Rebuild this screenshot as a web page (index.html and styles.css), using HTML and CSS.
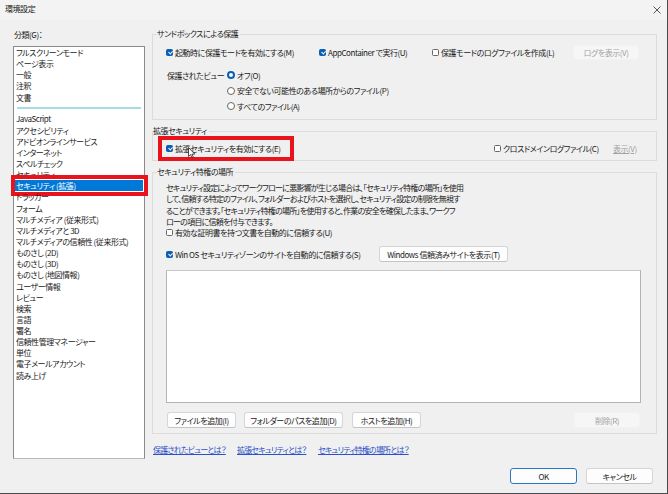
FILE: index.html
```html
<!DOCTYPE html>
<html lang="ja">
<head>
<meta charset="utf-8">
<title>環境設定</title>
<link rel="stylesheet" href="styles.css">
</head>
<body>
<div class="window">
  <div class="titlebar">
    <span class="title">環境設定</span>
    <svg class="close" width="8" height="8" viewBox="0 0 8 8"><path d="M0.5 0.5 L7.5 7.5 M7.5 0.5 L0.5 7.5" stroke="#444" stroke-width="0.9" fill="none"/></svg>
  </div>
  <div class="main">
    <div class="left">
      <div class="cat-label">分類(G)：</div>
      <div class="catlist">
        <div class="item">フルスクリーンモード</div>
        <div class="item">ページ表示</div>
        <div class="item">一般</div>
        <div class="item">注釈</div>
        <div class="item">文書</div>
        <div class="sep"></div>
        <div class="item">JavaScript</div>
        <div class="item">アクセシビリティ</div>
        <div class="item">アドビオンラインサービス</div>
        <div class="item">インターネット</div>
        <div class="item">スペルチェック</div>
        <div class="item">セキュリティ</div>
        <div class="item selected">セキュリティ (拡張)<span class="redbox redbox-list"></span></div>
        <div class="item">トラッカー</div>
        <div class="item">フォーム</div>
        <div class="item">マルチメディア (従来形式)</div>
        <div class="item">マルチメディアと 3D</div>
        <div class="item">マルチメディアの信頼性 (従来形式)</div>
        <div class="item">ものさし (2D)</div>
        <div class="item">ものさし (3D)</div>
        <div class="item">ものさし (地図情報)</div>
        <div class="item">ユーザー情報</div>
        <div class="item">レビュー</div>
        <div class="item">検索</div>
        <div class="item">言語</div>
        <div class="item">署名</div>
        <div class="item">信頼性管理マネージャー</div>
        <div class="item">単位</div>
        <div class="item">電子メールアカウント</div>
        <div class="item">読み上げ</div>
      </div>
    </div>
    <div class="right">
      <fieldset class="group g1">
        <legend>サンドボックスによる保護</legend>
        <div class="row r1">
          <label class="check c1"><span class="cb on"></span>起動時に保護モードを有効にする(M)</label>
          <label class="check c2"><span class="cb on"></span>AppContainer で実行(U)</label>
          <label class="check c3"><span class="cb"></span>保護モードのログファイルを作成(L)</label>
          <span class="btn disabled logbtn">ログを表示(V)</span>
        </div>
        <div class="row r2">
          <span class="pv-label">保護されたビュー</span>
          <label class="radio"><span class="rb on"></span>オフ(O)</label>
        </div>
        <div class="row r3 indent">
          <label class="radio"><span class="rb"></span>安全でない可能性のある場所からのファイル(P)</label>
        </div>
        <div class="row r4 indent">
          <label class="radio"><span class="rb"></span>すべてのファイル(A)</label>
        </div>
      </fieldset>

      <fieldset class="group g2">
        <legend>拡張セキュリティ</legend>
        <div class="row r5">
          <label class="check es"><span class="cb on"></span>拡張セキュリティを有効にする(E)</label>
          <label class="check xd"><span class="cb"></span>クロスドメインログファイル(C)</label>
          <span class="showlink">表示(V)</span>
          <span class="redbox redbox-es"></span>
          <svg class="cursor" width="8" height="12" viewBox="0 0 8 12"><path d="M0.5 0.5 L0.5 9.5 L2.6 7.6 L4 10.8 L5.3 10.2 L3.9 7.1 L6.8 7.1 Z" fill="#fff" stroke="#222" stroke-width="0.8"/></svg>
        </div>
      </fieldset>

      <fieldset class="group g3">
        <legend>セキュリティ特権の場所</legend>
        <p class="desc">セキュリティ設定によってワークフローに悪影響が生じる場合は、「セキュリティ特権の場所」を使用<br>して、信頼する特定のファイル、フォルダーおよびホストを選択し、セキュリティ設定の制限を無視す<br>ることができます。「セキュリティ特権の場所」を使用すると、作業の安全を確保したまま、ワークフ<br>ローの項目に信頼を付与できます。</p>
        <div class="row r6">
          <label class="check"><span class="cb"></span>有効な証明書を持つ文書を自動的に信頼する(U)</label>
        </div>
        <div class="row r7">
          <label class="check winos"><span class="cb on"></span>Win OS セキュリティゾーンのサイトを自動的に信頼する(S)</label>
          <span class="btn winbtn">Windows 信頼済みサイトを表示(T)</span>
        </div>
        <div class="pathlist"></div>
        <div class="row r8">
          <span class="btn b-file">ファイルを追加(I)</span>
          <span class="btn b-folder">フォルダーのパスを追加(D)</span>
          <span class="btn b-host">ホストを追加(H)</span>
          <span class="btn disabled b-del">削除(R)</span>
        </div>
      </fieldset>

      <div class="links">
        <a class="lnk l1">保護されたビューとは？</a>
        <a class="lnk l2">拡張セキュリティとは？</a>
        <a class="lnk l3">セキュリティ特権の場所とは？</a>
      </div>
    </div>
  </div>
  <div class="footer">
    <span class="btn ok">OK</span>
    <span class="btn cancel">キャンセル</span>
  </div>
</div>
</body>
</html>
```
FILE: styles.css
```css
* { box-sizing: border-box; }
html, body { margin: 0; padding: 0; }
body {
  width: 668px;
  height: 494px;
  overflow: hidden;
  background: #f0f0f0;
  font-family: "Noto Sans CJK JP", "Noto Sans", sans-serif;
  font-size: 8px;
  letter-spacing: -0.45px;
  font-feature-settings: "palt";
  color: #1a1a1a;
}
.window {
  width: 668px;
  height: 494px;
  background: #f0f0f0;
  border-right: 1px solid #4a4a4a;
  border-bottom: 1px solid #4a4a4a;
  display: flex;
  flex-direction: column;
}
.titlebar {
  height: 20px;
  display: flex;
  align-items: center;
  justify-content: space-between;
  padding: 0 6px 2px 5px;
  background: #f3f3f3;
}
.title { line-height: 12px; }
.close { display: block; margin-top: 1px; }
.main {
  display: flex;
  padding: 8px 0 0 13px;
  gap: 7px;
}
.left { width: 132px; padding-top: 1px; }
.cat-label { line-height: 12px; margin-bottom: 5px; padding-left: 1px; }
.catlist {
  height: 413px;
  background: #fff;
  border: 1px solid #8a8a8a;
  border-bottom-color: #b8b8b8;
  padding: 0 1px;
}
.item {
  position: relative;
  height: 11.15px;
  line-height: 11.15px;
  padding-left: 1px;
  white-space: nowrap;
}
.item.selected { background: #0078d7; color: #fff; }
.sep {
  height: 10.7px;
  display: flex;
  align-items: center;
  padding: 0 2px;
}
.sep::before {
  content: "";
  display: block;
  flex: 1;
  height: 2px;
  background: #a9dbe6;
}
.redbox {
  position: absolute;
  border: 4px solid #e8131b;
  pointer-events: none;
}
.redbox-list { left: -4px; right: -5px; top: -5px; bottom: -4.5px; }

.right { width: 505px; }
.group {
  margin: 0;
  padding: 0 15px 0 13px;
  border: 1px solid #dcdcdc;
  min-width: 0;
}
.group legend {
  padding: 0 2px 0 0;
  margin-left: -9px;
  line-height: 12px;
}
.g2 legend { margin-left: -13px; }
.row { display: flex; align-items: center; white-space: nowrap; position: relative; }
.check, .radio { display: inline-flex; align-items: center; }
.cb {
  width: 7px; height: 7px;
  border: 1px solid #666;
  border-radius: 1.5px;
  background: #fff;
  margin-right: 2px;
  flex: none;
  position: relative;
}
.cb.on { background: #0a5fb4; border-color: #0a5fb4; }
.cb.on::after {
  content: "";
  position: absolute;
  left: 1.6px; top: 0px;
  width: 1.8px; height: 3.4px;
  border-right: 1px solid #fff;
  border-bottom: 1px solid #fff;
  transform: rotate(42deg);
}
.rb {
  width: 8px; height: 8px;
  border: 1px solid #666;
  border-radius: 50%;
  background: #fff;
  margin-right: 2px;
  flex: none;
}
.rb.on { border: 2.5px solid #0a5fb4; }

.btn {
  display: inline-flex;
  align-items: center;
  justify-content: center;
  background: #fdfdfd;
  border: 1px solid #d6d6d6;
  border-bottom-color: #c4c4c4;
  border-radius: 3px;
  height: 16px;
  color: #1a1a1a;
}
.btn.disabled { background: #f6f6f6; border-color: #f2f2f2; color: #a3a3a3; }

.g1 { height: 92px; }
.r1 { height: 16px; margin-top: 4px; }
.c1 { width: 153px; }
.c2 { width: 113px; }
.c3 { width: 141px; }
.logbtn { width: 66px; height: 15px; }
.r2 { height: 16px; margin-top: 7px; }
.pv-label { width: 61px; padding-left: 1px; }
.r3, .r4 { height: 15.5px; }
.indent { padding-left: 61px; }

.g2 { margin-top: 5px; height: 36px; }
.r5 { height: 16px; margin-top: 3px; }
.es { width: 328px; }
.redbox-es { left: -8px; top: -4px; width: 136px; height: 25px; }
.cursor { position: absolute; left: 22px; top: 7px; }
.xd { width: 119px; }
.showlink { color: #a3a3a3; text-decoration: underline; }

.g3 { margin-top: 5px; height: 268px; }
.desc { margin: 4px 0 0 0; height: 43px; line-height: 11.4px; white-space: nowrap; letter-spacing: -0.75px; }
.r6 { height: 14px; margin-top: 0; }
.r7 { height: 18px; margin-top: 6px; }
.winos { width: 213px; }
.winbtn { width: 129px; height: 16px; }
.pathlist {
  margin-top: 7px;
  height: 133px;
  background: #fff;
  border: 1px solid #b4b4b4;
  border-top-color: #c8c8c8;
}
.r8 { margin-top: 9px; height: 16px; }
.b-file { width: 69px; margin-left: 1px; }
.b-folder { width: 99px; margin-left: 8px; }
.b-host { width: 69px; margin-left: 9px; }
.b-del { width: 66px; margin-left: auto; margin-right: 1px; }

.links { margin-top: 10px; display: flex; line-height: 12px; padding-left: 1px; letter-spacing: -0.8px; }
.lnk { color: #2b50c8; text-decoration: underline; cursor: pointer; }
.l1 { width: 84px; }
.l2 { width: 81px; }

.footer {
  display: flex;
  justify-content: flex-end;
  padding: 0 14px 0 0;
  margin-top: 9px;
  gap: 9px;
}
.ok, .cancel { width: 67px; height: 16px; }
.ok { border: 1px solid #2b77c4; }
```
